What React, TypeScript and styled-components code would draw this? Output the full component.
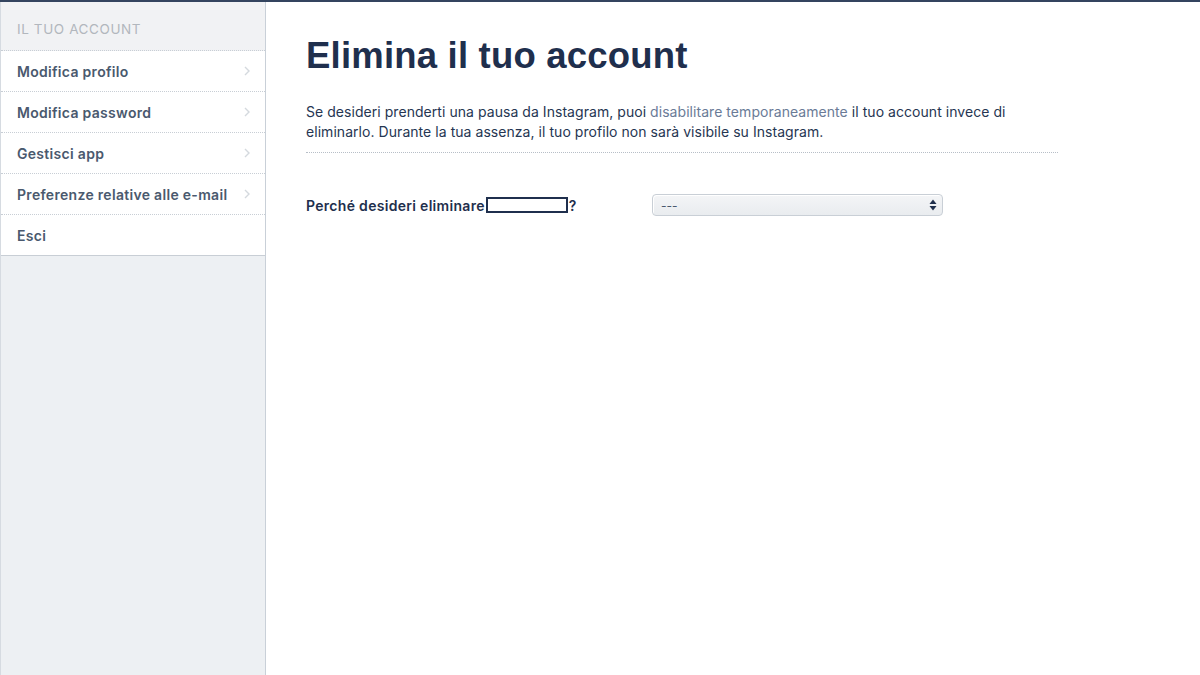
import React from 'react'
import styled, { createGlobalStyle } from 'styled-components'

const GlobalStyle = createGlobalStyle`
  html, body {
    margin: 0;
    padding: 0;
    background: #ffffff;
  }
  body {
    font-family: Inter, 'Liberation Sans', Arial, sans-serif;
    color: #1f2f4d;
  }
`

const Page = styled.div`
  display: flex;
  min-height: 675px;
  border-top: 2px solid #34445f;
  box-sizing: border-box;
`

const Sidebar = styled.nav`
  width: 266px;
  flex-shrink: 0;
  background: #edf0f3;
  border-left: 1px solid #d6dbe1;
  border-right: 1px solid #c9d0d8;
  box-sizing: border-box;
  min-height: 673px;
`

const SideHeader = styled.div`
  height: 49px;
  box-sizing: border-box;
  padding: 19px 0 0 16px;
  font-size: 13.5px;
  letter-spacing: 0.6px;
  color: #b2b7bd;
  background: #f1f2f4;
  border-bottom: 1px dotted #c8ced5;
`

const SideItem = styled.a<{ $last?: boolean }>`
  display: flex;
  align-items: center;
  justify-content: space-between;
  height: 41px;
  box-sizing: border-box;
  padding: 0 14px 0 16px;
  background: #ffffff;
  border-bottom: 1px ${p => (p.$last ? 'solid' : 'dotted')} #c8ced5;
  font-size: 14px;
  font-weight: 600;
  letter-spacing: 0.3px;
  color: #4a596e;
  text-decoration: none;
`

const Chevron = () => (
  <svg width="8" height="12" viewBox="0 0 8 12">
    <path d="M2 2 L6 6 L2 10" fill="none" stroke="#d4d9de" strokeWidth="1.4" />
  </svg>
)

const Main = styled.main`
  flex: 1;
  padding: 33px 0 0 40px;
`

const Title = styled.h1`
  margin: 0;
  font-family: 'Liberation Sans', Arial, sans-serif;
  font-size: 36.5px;
  font-weight: bold;
  color: #1f2f4d;
  letter-spacing: 0.2px;
  line-height: 42px;
`

const Intro = styled.p`
  margin: 25px 0 0;
  width: 752px;
  padding-bottom: 10px;
  border-bottom: 1px dotted #b7bec7;
  font-size: 14px;
  letter-spacing: 0.05px;
  line-height: 20px;
  color: #263652;
`

const SoftLink = styled.a`
  color: #6a7b97;
  text-decoration: none;
`

const FormRow = styled.div`
  display: flex;
  align-items: center;
  margin-top: 41px;
`

const Label = styled.label`
  width: 346px;
  font-size: 14px;
  font-weight: 600;
  letter-spacing: 0.3px;
  color: #1f2f4d;
  display: flex;
  align-items: center;
`

const Redacted = styled.span`
  display: inline-block;
  width: 78px;
  height: 12px;
  border: 2px solid #1f2f4d;
  background: #ffffff;
  margin: 0 1px;
`

const SelectBox = styled.div`
  width: 291px;
  height: 22px;
  box-sizing: border-box;
  display: flex;
  align-items: center;
  justify-content: space-between;
  padding: 0 5px 0 8px;
  border: 1px solid #c9cfd6;
  border-radius: 4px;
  background: linear-gradient(#f4f5f7, #e9ecef);
  box-shadow: inset 1px 1px 0 #ffffff;
  font-size: 12px;
  color: #4a596e;
`

const Arrows = () => (
  <svg width="8" height="12" viewBox="0 0 8 12">
    <path d="M4 0.5 L7.5 5 H0.5 Z" fill="#1f2f4d" />
    <path d="M4 11.5 L7.5 7 H0.5 Z" fill="#1f2f4d" />
  </svg>
)

const menu = [
  'Modifica profilo',
  'Modifica password',
  'Gestisci app',
  'Preferenze relative alle e-mail',
]

export default function App() {
  return (
    <>
      <GlobalStyle />
      <Page>
        <Sidebar>
          <SideHeader>IL TUO ACCOUNT</SideHeader>
          {menu.map(item => (
            <SideItem key={item}>
              {item}
              <Chevron />
            </SideItem>
          ))}
          <SideItem $last>Esci</SideItem>
        </Sidebar>
        <Main>
          <Title>Elimina il tuo account</Title>
          <Intro>
            Se desideri prenderti una pausa da Instagram, puoi{' '}
            <SoftLink>disabilitare temporaneamente</SoftLink> il tuo account invece di
            eliminarlo. Durante la tua assenza, il tuo profilo non sarà visibile su Instagram.
          </Intro>
          <FormRow>
            <Label>
              Perché desideri eliminare<Redacted />?
            </Label>
            <SelectBox>
              <span>---</span>
              <Arrows />
            </SelectBox>
          </FormRow>
        </Main>
      </Page>
    </>
  )
}
